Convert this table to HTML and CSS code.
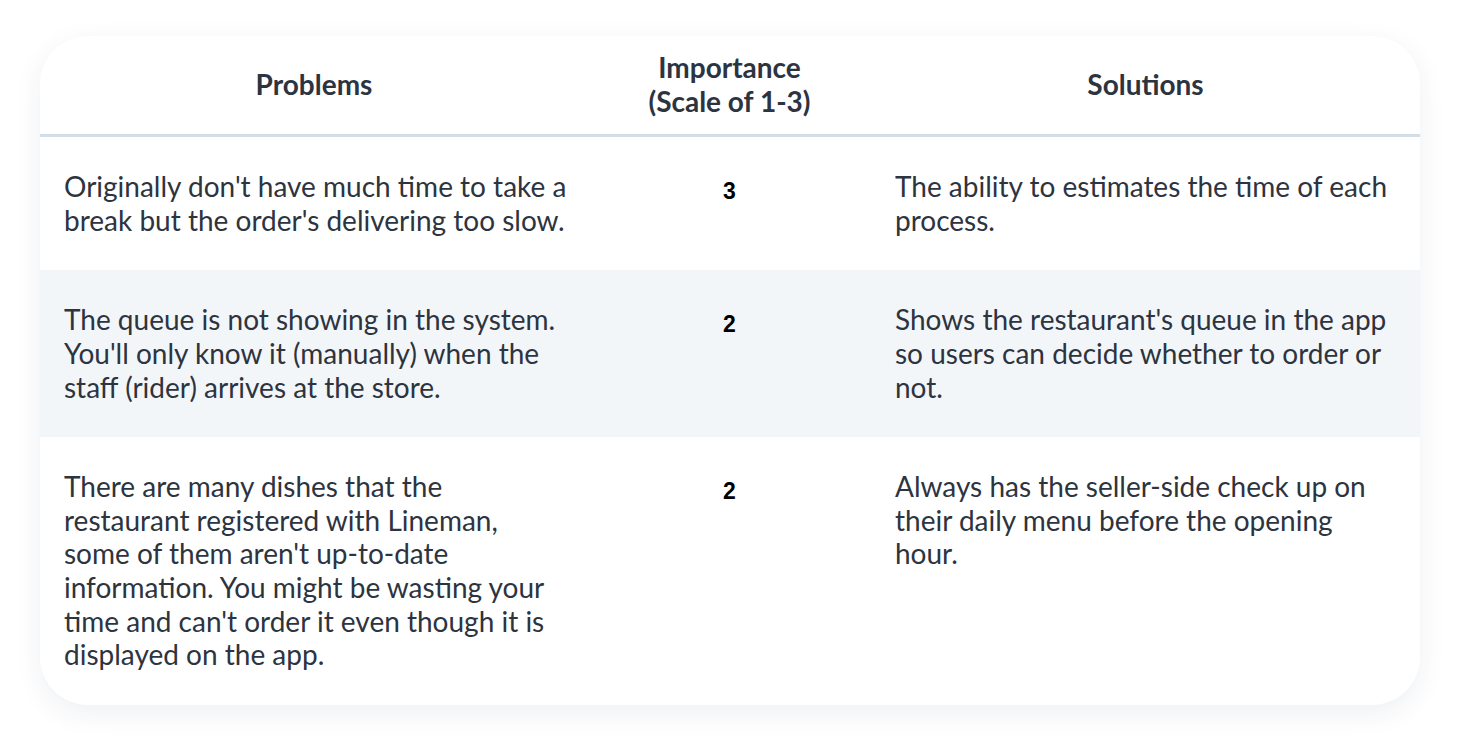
FILE: index.html
```html
<!DOCTYPE html>
<html lang="en">
<head>
<meta charset="utf-8">
<title>Problems and Solutions</title>
<link rel="stylesheet" href="styles.css">
</head>
<body>
<div class="card">
  <table class="grid">
    <colgroup>
      <col class="c-problem">
      <col class="c-imp">
      <col class="c-sol">
    </colgroup>
    <thead>
      <tr>
        <th>Problems</th>
        <th>Importance<br>(Scale of 1-3)</th>
        <th>Solutions</th>
      </tr>
    </thead>
    <tbody>
      <tr>
        <td>Originally don't have much time to take a break but the order's delivering too slow.</td>
        <td class="num"><span>3</span></td>
        <td>The ability to estimates the time of each process.</td>
      </tr>
      <tr class="alt">
        <td>The queue is not showing in the system. You'll only know it (manually) when the staff (rider) arrives at the store.</td>
        <td class="num"><span>2</span></td>
        <td>Shows the restaurant's queue in the app so users can decide whether to order or not.</td>
      </tr>
      <tr>
        <td>There are many dishes that the restaurant registered with Lineman, some of them aren't up-to-date information. You might be wasting your time and can't order it even though it is displayed on the app.</td>
        <td class="num"><span>2</span></td>
        <td>Always has the seller-side check up on their daily menu before the opening hour.</td>
      </tr>
    </tbody>
  </table>
</div>
</body>
</html>
```

FILE: styles.css
```css
html, body {
  margin: 0;
  background: #ffffff;
}
body {
  padding: 36px 40px;
  font-family: Lato, "Liberation Sans", sans-serif;
  color: #2d3440;
}
.card {
  width: 1380px;
  background: #ffffff;
  border-radius: 48px;
  overflow: hidden;
  box-shadow: 0 8px 28px rgba(20, 40, 80, 0.07);
}
.grid {
  width: 100%;
  border-collapse: collapse;
  table-layout: fixed;
}
.c-problem { width: 548px; }
.c-imp { width: 283px; }
.c-sol { width: 549px; }
th {
  font-weight: 700;
  font-size: 28px;
  line-height: 33.6px;
  padding: 15px 24px 16px;
  text-align: center;
  border-bottom: 3px solid #d2dde6;
  color: #2d3440;
}
td {
  font-size: 28px;
  line-height: 33.6px;
  padding: 33px 24px 33px;
  vertical-align: top;
  text-align: left;
}
td:first-child {
  padding-right: 19px;
}
tr.alt td {
  background: #f3f6f9;
}
td.num {
  text-align: center;
  font-family: "Liberation Sans", Arial, sans-serif;
  font-weight: 700;
  font-size: 23px;
  color: #000;
}
td.num span {
  display: block;
  padding-top: 5px;
}
```
